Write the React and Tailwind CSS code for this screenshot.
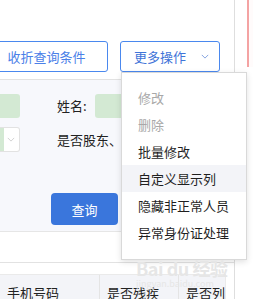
import React from 'react';

const FONT = { fontFamily: '"Noto Sans CJK SC", "Noto Sans", sans-serif' };

function Chevron({ className }) {
  return (
    <svg className={className} viewBox="0 0 10 6" fill="none" stroke="currentColor" strokeWidth={1}>
      <path d="M1 1l4 4 4-4" />
    </svg>
  );
}

const MENU = [
  { label: '修改', disabled: true },
  { label: '删除', disabled: true },
  { label: '批量修改' },
  { label: '自定义显示列', active: true },
  { label: '隐藏非正常人员' },
  { label: '异常身份证处理' },
];

function MoreMenu() {
  return (
    <div className="absolute left-[121px] top-[72px] w-[126px] h-[188px] bg-white border border-[#d9d9d9] shadow-[0_2px_6px_rgba(0,0,0,0.12)] pt-[11px] z-10">
      {MENU.map((item) => (
        <div
          key={item.label}
          className={`h-[27px] pl-[16px] flex items-center text-[13px] ${
            item.disabled ? 'text-[#a8a8a8]' : 'text-[#1f1f1f]'
          } ${item.active ? 'bg-[#f3f4f8]' : ''}`}
        >
          {item.label}
        </div>
      ))}
    </div>
  );
}

export default function App() {
  return (
    <div className="relative w-[253px] h-[299px] overflow-hidden bg-white flex" style={FONT}>
      <div className="w-[235px] shrink-0 border-r border-[#dedede] flex flex-col">
        {/* toolbar */}
        <div className="h-[81px] border-b border-[#e2e2e2] flex items-start pt-[41px]">
          <button className="ml-[-15px] w-[123px] h-[31px] rounded-[3px] border border-[#4a88ee] text-[#4a80e8] text-[13px] flex items-center justify-center">
            收折查询条件
          </button>
          <button className="ml-[12px] w-[100px] h-[31px] rounded-[3px] border border-[#4a88ee] text-[#3f74d8] text-[13px] flex items-center pl-[13px]">
            更多操作
            <Chevron className="w-[8px] h-[5px] ml-[15px] text-[#6a8fd8]" />
          </button>
        </div>

        {/* query form */}
        <div className="h-[154px] bg-[#f7f8fc] border-b border-[#e6e6e6] flex flex-col">
          <div className="flex items-center mt-[13px] h-[25px]">
            <div className="w-[20px] h-[24px] bg-[#d3e9d3] rounded-r-[3px]" />
            <span className="ml-[37px] text-[13px] text-[#222]">姓名:</span>
            <div className="ml-[8px] w-[40px] h-[24px] bg-[#d3e9d3] rounded-l-[3px]" />
          </div>
          <div className="flex items-center mt-[9px] h-[25px]">
            <div className="w-[20px] h-[25px] bg-white border border-[#e2e2e2] border-l-0 rounded-r-[3px] flex items-center">
              <div className="w-[4px] h-full bg-[#d3e9d3]" />
              <Chevron className="w-[8px] h-[5px] ml-[3px] text-[#c8c8c8]" />
            </div>
            <span className="ml-[37px] text-[13px] text-[#222] whitespace-nowrap">是否股东、</span>
          </div>
          <button className="mt-[41px] ml-[51px] w-[67px] h-[32px] rounded-[4px] bg-[#3a76dc] text-white text-[13px]">
            查询
          </button>
        </div>

        {/* table */}
        <div className="h-[31px] border-b border-[#e2e2e2]" />
        <div className="mt-[11px] w-[226px] flex-1 bg-[#f3f4f8] border-t border-r border-[#eaeaea] flex text-[13px] leading-none text-[#222]">
          <div className="w-[100px] border-r border-[#e4e4e4] pl-[7px] pt-[11px]">手机号码</div>
          <div className="w-[79px] border-r border-[#e4e4e4] pl-[7px] pt-[11px]">是否残疾</div>
          <div className="pl-[7px] pt-[11px] whitespace-nowrap">是否列</div>
        </div>
      </div>

      <div className="flex-1 pl-[12px]">
        <div className="h-[67px] border-l-2 border-[#f4a3a3] bg-[#fffbfb]" />
      </div>

      <MoreMenu />

      {/* watermark */}
      <div className="absolute left-[136px] top-[259px] text-[#e6e6e6] leading-none pointer-events-none z-20">
        <div className="text-[18px] font-bold tracking-tight">Bai du 经验</div>
        <div className="text-[9px] mt-[2px]">jingyan.baidu.com</div>
      </div>
    </div>
  );
}
